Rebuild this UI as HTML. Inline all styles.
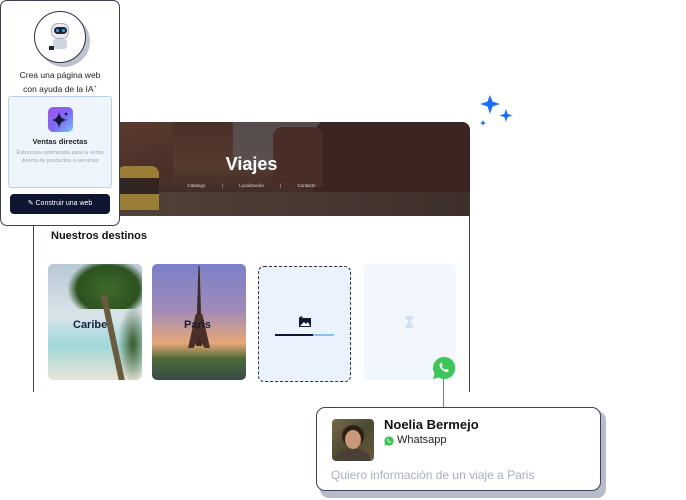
<!DOCTYPE html>
<html><head><meta charset="utf-8"><style>
*{margin:0;padding:0;box-sizing:border-box}
body{width:686px;height:500px;background:#fff;position:relative;overflow:hidden;font-family:"Liberation Sans",sans-serif;color:#111a33}
.abs{position:absolute}
</style></head><body>

<div class="abs" style="left:33px;top:122px;width:437px;height:270px;border:1px solid #3a3f55;border-bottom:none;border-radius:0 8px 0 0"></div>
<div class="abs" style="left:33px;top:122px;width:437px;height:94px;border-radius:0 8px 0 0;overflow:hidden;background:linear-gradient(180deg,#5b3c33 0%,#6e4a3c 45%,#4f3a32 75%,#5e4b40 100%)">
  <div class="abs" style="left:0;top:0;width:140px;height:60px;background:linear-gradient(160deg,#7a5040,#5a3a30)"></div>
  <div class="abs" style="left:200px;top:0;width:110px;height:45px;background:#7a7f88;opacity:.55"></div>
  <div class="abs" style="left:280px;top:-10px;width:160px;height:80px;background:#4a2e28;border-radius:30px 20px 0 0"></div>
  <div class="abs" style="left:240px;top:5px;width:50px;height:60px;background:#5b3a30;border-radius:10px 10px 0 0"></div>
  <div class="abs" style="left:0;top:70px;width:437px;height:24px;background:linear-gradient(90deg,#6a5a4a,#5a4a40 60%,#4a3c34)"></div>
  <div class="abs" style="left:84px;top:44px;width:42px;height:44px;background:#c9a343;border-radius:8px 8px 0 0"></div>
  <div class="abs" style="left:84px;top:56px;width:42px;height:16px;background:#3a2e28"></div>
  <div class="abs" style="left:0;top:0;width:437px;height:94px;background:rgba(20,10,10,.25)"></div>
  <div class="abs" style="left:0;top:32px;width:437px;text-align:center;color:#fff;font-size:18px;font-weight:bold">Viajes</div>
  <div class="abs" style="left:0;top:61px;width:437px;text-align:center;color:#ddd;font-size:4.5px;word-spacing:2px">Catalogo &nbsp; &nbsp; | &nbsp; &nbsp; Localización &nbsp; &nbsp; | &nbsp; &nbsp; Contacto</div>
</div>

<div class="abs" style="left:51px;top:230px;font-size:11px;font-weight:bold;color:#111">Nuestros destinos</div>

<div class="abs" style="left:48px;top:264px;width:94px;height:116px;border-radius:5px;overflow:hidden;background:linear-gradient(180deg,#b8c8d4 0%,#d8e4ea 45%,#a0d8d8 70%,#e8e4d8 100%)">
  <div class="abs" style="left:20px;top:-5px;width:80px;height:50px;background:radial-gradient(ellipse at 50% 60%,#3f6a2a,#2d5220 55%,transparent 72%)"></div>
  <div class="abs" style="left:62px;top:30px;width:6px;height:90px;background:#6a5a40;transform:rotate(-12deg)"></div>
  <div class="abs" style="left:70px;top:40px;width:30px;height:80px;background:radial-gradient(ellipse,#3a5a28,transparent 70%)"></div>
  <div class="abs" style="left:25px;top:55px;font-size:11px;font-weight:bold;color:#16203a">Caribe</div>
</div>
<div class="abs" style="left:152px;top:264px;width:94px;height:116px;border-radius:5px;overflow:hidden;background:linear-gradient(180deg,#7a80c8 0%,#a08ab8 40%,#e8a878 68%,#4a6a38 82%,#3a4a48 100%)">
  <div class="abs" style="left:44px;top:2px;width:6px;height:80px;background:#3a2a28;clip-path:polygon(40% 0,60% 0,100% 100%,0 100%)"></div>
  <div class="abs" style="left:36px;top:50px;width:22px;height:34px;background:#4a3028;clip-path:polygon(35% 0,65% 0,100% 100%,75% 100%,50% 70%,25% 100%,0 100%)"></div>
  <div class="abs" style="left:32px;top:55px;font-size:11px;font-weight:bold;color:#16203a">Paris</div>
</div>
<div class="abs" style="left:258px;top:266px;width:93px;height:116px;border-radius:6px;border:1.3px dashed #2a2f45;background:#eaf3fd">
  <svg class="abs" style="left:39px;top:49px" width="14" height="12" viewBox="0 0 14 12"><rect x="1" y="2" width="12" height="9" fill="#111a33"/><path d="M2 10 L6 6 L8 8 L10 6 L12 10Z" fill="#fff"/><path d="M3 0v4M1 2h4" stroke="#111a33" stroke-width="1.2"/></svg>
  <div class="abs" style="left:16px;top:67px;width:38px;height:2px;background:#0f1733"></div>
  <div class="abs" style="left:54px;top:67px;width:21px;height:2px;background:#8cc0ee"></div>
</div>
<div class="abs" style="left:364px;top:264px;width:92px;height:116px;border-radius:5px;background:#f2f7fd">
  <div class="abs" style="left:41px;top:52px;width:9px;height:12px;background:#cfe0f3;clip-path:polygon(0 0,100% 0,60% 50%,100% 100%,0 100%,40% 50%)"></div>
</div>

<div class="abs" style="left:443px;top:376px;width:1px;height:31px;background:#7a8090"></div>
<svg class="abs" style="left:432px;top:356px" width="24" height="24" viewBox="0 0 24 24"><path d="M12 1a11 11 0 0 0-9.5 16.5L1 23l5.7-1.5A11 11 0 1 0 12 1z" fill="#3ec55a"/><path d="M8.5 7c.4-.3 1-.3 1.2.2l.9 2c.1.4 0 .7-.3 1l-.5.5c.6 1.3 1.7 2.4 3 3l.5-.5c.3-.3.7-.4 1-.2l2 .9c.4.2.5.8.2 1.2-.8 1-2 1.3-3.2.8-2.6-1-4.6-3-5.6-5.6-.4-1.2-.1-2.4.8-3.3z" fill="#fff"/></svg>

<div class="abs" style="left:320px;top:411px;width:286px;height:87px;border-radius:9px;background:#b8bcc8"></div>
<div class="abs" style="left:316px;top:407px;width:285px;height:84px;border-radius:9px;border:1px solid #3a4060;background:#fff">
  <div class="abs" style="left:15px;top:11px;width:42px;height:42px;border-radius:4px;overflow:hidden;background:linear-gradient(135deg,#7a6a4a,#4a4a30 50%,#6a5a40)">
    <div class="abs" style="left:10px;top:6px;width:22px;height:22px;border-radius:50%;background:#2a2018"></div>
    <div class="abs" style="left:13px;top:11px;width:16px;height:19px;border-radius:50%;background:#c89878"></div>
    <div class="abs" style="left:4px;top:30px;width:34px;height:16px;border-radius:50% 50% 0 0;background:#4a4038"></div>
  </div>
  <div class="abs" style="left:67px;top:9px;font-size:13px;font-weight:bold;color:#111">Noelia Bermejo</div>
  <svg class="abs" style="left:67px;top:28px" width="10" height="10" viewBox="0 0 24 24"><path d="M12 1a11 11 0 0 0-9.5 16.5L1 23l5.7-1.5A11 11 0 1 0 12 1z" fill="#3ec55a"/><path d="M8.5 7c.4-.3 1-.3 1.2.2l.9 2c.1.4 0 .7-.3 1l-.5.5c.6 1.3 1.7 2.4 3 3l.5-.5c.3-.3.7-.4 1-.2l2 .9c.4.2.5.8.2 1.2-.8 1-2 1.3-3.2.8-2.6-1-4.6-3-5.6-5.6-.4-1.2-.1-2.4.8-3.3z" fill="#fff"/></svg>
  <div class="abs" style="left:80px;top:26px;font-size:11px;color:#222">Whatsapp</div>
  <div class="abs" style="left:14px;top:60px;font-size:12px;color:#a6aec4">Quiero información de un viaje a Paris</div>
</div>

<svg class="abs" style="left:478px;top:95px" width="40" height="36" viewBox="0 0 40 36"><path d="M12 0 L14.5 6.5 L22 9 L14.5 11.5 L12 19 L9.5 11.5 L2 9 L9.5 6.5Z" fill="#1a6ff5"/><path d="M28 14 L29.6 18.9 L34.5 20.5 L29.6 22.1 L28 27 L26.4 22.1 L21.5 20.5 L26.4 18.9Z" fill="#1a6ff5"/><path d="M5 25 L5.9 27.1 L8 28 L5.9 28.9 L5 31 L4.1 28.9 L2 28 L4.1 27.1Z" fill="#1a6ff5"/></svg>

<div class="abs" style="left:0;top:0;width:120px;height:226px;border:1px solid #3a3f55;border-radius:7px;background:#fff">
  <div class="abs" style="left:37px;top:14px;width:52px;height:52px;border-radius:50%;background:#bfc3cf"></div>
  <div class="abs" style="left:33px;top:10px;width:52px;height:52px;border-radius:50%;border:1px solid #2a2f45;background:#fff">
    <div class="abs" style="left:16px;top:11px;width:18px;height:16px;border-radius:7px;background:#e8ecf2;border:1px solid #aab"></div>
    <div class="abs" style="left:19px;top:15px;width:13px;height:7px;border-radius:4px;background:#223"></div>
    <div class="abs" style="left:21px;top:17px;width:3px;height:3px;border-radius:50%;background:#3af"></div>
    <div class="abs" style="left:27px;top:17px;width:3px;height:3px;border-radius:50%;background:#3af"></div>
    <div class="abs" style="left:18px;top:27px;width:14px;height:10px;border-radius:3px;background:#cfd5de"></div>
    <div class="abs" style="left:14px;top:34px;width:5px;height:4px;background:#223"></div>
  </div>
  <div class="abs" style="left:0;top:69px;width:118px;text-align:center;font-size:8.5px;line-height:11px;color:#222">Crea una página web<br>con ayuda de la IA<sup style="font-size:4px;color:#1a6ff5">✦</sup></div>
  <div class="abs" style="left:7px;top:95px;width:104px;height:92px;border-radius:3px;border:1px solid #b9d3ee;background:#eef5fd">
    <div class="abs" style="left:39px;top:10px;width:25px;height:25px;border-radius:5px;background:linear-gradient(135deg,#a44ef0,#7a6cf5 55%,#7ac6f5)">
      <svg width="25" height="25" viewBox="0 0 25 25"><path d="M11 5 Q12 12 19 13 Q12 14 11 21 Q10 14 4 13 Q10 12 11 5Z" fill="#111a33"/><circle cx="18" cy="7" r="1.3" fill="#111a33"/></svg>
    </div>
    <div class="abs" style="left:0;top:40px;width:102px;text-align:center;font-size:7.5px;font-weight:bold;color:#222">Ventas directas</div>
    <div class="abs" style="left:6px;top:53px;width:90px;text-align:center;font-size:5.5px;line-height:7.5px;color:#9aa6ba">Estructura optimizada para la venta directa de productos o servicios</div>
  </div>
  <div class="abs" style="left:9px;top:193px;width:100px;height:20px;border-radius:4px;background:#0e1530;color:#fff;font-size:7px;text-align:center;line-height:20px">✎ Construir una web</div>
</div>
</body></html>
